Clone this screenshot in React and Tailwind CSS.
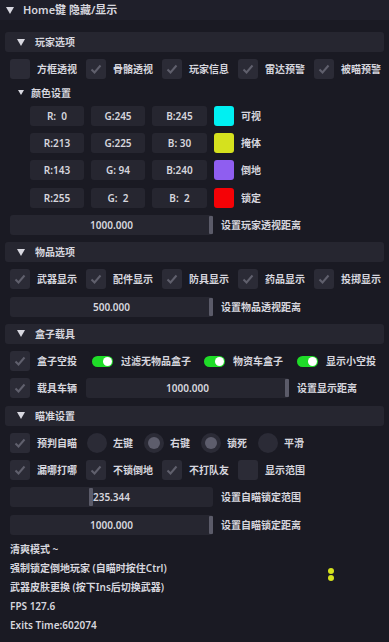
import React from 'react';

const FONT = { fontFamily: '"Noto Sans", "Noto Sans CJK SC", sans-serif' };

const Tri = ({ size = 'big' }) =>
  size === 'big' ? (
    <svg width="8" height="7" viewBox="0 0 8 7" className="shrink-0">
      <path d="M0 0 L8 0 L4 7 Z" fill="#d8d8e0" />
    </svg>
  ) : (
    <svg width="6" height="5" viewBox="0 0 6 5" className="shrink-0">
      <path d="M0 0 L6 0 L3 5 Z" fill="#d8d8e0" />
    </svg>
  );

const Header = ({ children }) => (
  <div className="-mx-[5px] h-[20px] rounded-[3px] bg-[#262630] flex items-center pl-[12px] gap-[10px]">
    <Tri />
    <span>{children}</span>
  </div>
);

const Box = ({ checked }) => (
  <div className="w-[20px] h-[20px] rounded-[3px] bg-[#2b2b36] flex items-center justify-center shrink-0">
    {checked && (
      <svg width="14" height="14" viewBox="0 0 14 14">
        <path d="M2.5 7.5 L5.5 10.5 L11.5 3.5" fill="none" stroke="#60606d" strokeWidth="2" />
      </svg>
    )}
  </div>
);

const Check = ({ label, checked = true, w = 'w-[76px]' }) => (
  <div className={`${w} flex items-center gap-[7px] shrink-0`}>
    <Box checked={checked} />
    <span className="whitespace-nowrap">{label}</span>
  </div>
);

const Toggle = ({ label, w }) => (
  <div className={`${w} flex items-center gap-[8px] shrink-0`}>
    <div className="w-[21px] h-[11px] rounded-full bg-[#1fdc28] flex items-center justify-end pr-[1px]">
      <div className="w-[9px] h-[9px] rounded-full bg-white" />
    </div>
    <span className="whitespace-nowrap">{label}</span>
  </div>
);

const Radio = ({ label, on }) => (
  <div className="w-[57px] flex items-center gap-[6px] shrink-0">
    <div className="w-[20px] h-[20px] rounded-full bg-[#2b2b36] flex items-center justify-center">
      {on && <div className="w-[12px] h-[12px] rounded-full bg-[#5d5d6c]" />}
    </div>
    <span className="whitespace-nowrap">{label}</span>
  </div>
);

const Slider = ({ value, label, w = 'w-[203px]', grab }) => (
  <div className="flex items-center gap-[8px]">
    <div className={`${w} h-[20px] rounded-[3px] bg-[#262630] relative flex items-center justify-center shrink-0`}>
      <span>{value}</span>
      <div
        className="absolute top-[1px] bottom-[1px] w-[4px] rounded-[1px] bg-[#5b5b69]"
        style={{ left: grab }}
      />
    </div>
    <span className="whitespace-nowrap">{label}</span>
  </div>
);

const colors = [
  { r: 'R:  0', g: 'G:245', b: 'B:245', c: 'bg-[#00f0f2]', n: '可视' },
  { r: 'R:213', g: 'G:225', b: 'B: 30', c: 'bg-[#d5e11e]', n: '掩体' },
  { r: 'R:143', g: 'G: 94', b: 'B:240', c: 'bg-[#8f5ef0]', n: '倒地' },
  { r: 'R:255', g: 'G:  2', b: 'B:  2', c: 'bg-[#f50206]', n: '锁定' },
];

const Field = ({ t, w = 'w-[54px]' }) => (
  <div className={`${w} h-[20px] rounded-[3px] bg-[#262630] flex items-center justify-center whitespace-pre`}>
    {t}
  </div>
);

export default function App() {
  return (
    <div
      className="w-[389px] h-[642px] bg-[#1a1a23] text-[#d6d6de] text-[10px] font-semibold leading-[14px] relative overflow-hidden"
      style={FONT}
    >
      <div className="h-[20px] bg-[#1f1f2a] flex items-center pl-[6px] gap-[9px] text-[11px]">
        <Tri />
        <span>Home键 隐藏/显示</span>
      </div>

      <div className="px-[10px] pt-[12px] flex flex-col gap-[7.25px]">
        <Header>玩家选项</Header>
        <div className="flex">
          <Check label="方框透视" checked={false} />
          <Check label="骨骼透视" />
          <Check label="玩家信息" />
          <Check label="雷达预警" />
          <Check label="被瞄预警" w="" />
        </div>
        <div className="h-[12px] flex items-center pl-[8px] gap-[7px]">
          <Tri size="small" />
          <span>颜色设置</span>
        </div>
        {colors.map((c, i) => (
          <div key={i} className="flex items-center pl-[20px] gap-[7px]">
            <Field t={c.r} />
            <Field t={c.g} />
            <Field t={c.b} w="w-[55px]" />
            <div className={`w-[20px] h-[20px] rounded-[3px] ${c.c}`} />
            <span>{c.n}</span>
          </div>
        ))}
        <Slider value="1000.000" label="设置玩家透视距离" grab="199px" />

        <Header>物品选项</Header>
        <div className="flex">
          <Check label="武器显示" />
          <Check label="配件显示" />
          <Check label="防具显示" />
          <Check label="药品显示" />
          <Check label="投掷显示" w="" />
        </div>
        <Slider value="500.000" label="设置物品透视距离" grab="199px" />

        <Header>盒子载具</Header>
        <div className="flex items-center">
          <Check label="盒子空投" w="w-[82px]" />
          <Toggle label="过滤无物品盒子" w="w-[112px]" />
          <Toggle label="物资车盒子" w="w-[93px]" />
          <Toggle label="显示小空投" w="" />
        </div>
        <div className="flex items-center">
          <Check label="载具车辆" />
          <Slider value="1000.000" label="设置显示距离" grab="199px" />
        </div>

        <Header>瞄准设置</Header>
        <div className="flex items-center">
          <Check label="预判自瞄" w="w-[77px]" />
          <Radio label="左键" />
          <Radio label="右键" on />
          <Radio label="锁死" on />
          <Radio label="平滑" />
        </div>
        <div className="flex">
          <Check label="漏哪打哪" />
          <Check label="不锁倒地" />
          <Check label="不打队友" />
          <Check label="显示范围" checked={false} w="" />
        </div>
        <Slider value="235.344" label="设置自瞄锁定范围" grab="79px" />
        <Slider value="1000.000" label="设置自瞄锁定距离" grab="199px" />

        <div className="flex flex-col gap-[5px]">
          <div>清爽模式 ~</div>
          <div>强制锁定倒地玩家 (自瞄时按住Ctrl)</div>
          <div>武器皮肤更换 (按下Ins后切换武器)</div>
          <div>FPS 127.6</div>
          <div>Exits Time:602074</div>
        </div>
      </div>

      <div className="absolute left-[328px] top-[568px] w-[6px] h-[6px] rounded-full bg-[#d5e11e]" />
      <div className="absolute left-[328px] top-[575px] w-[6px] h-[6px] rounded-full bg-[#d5e11e]" />
    </div>
  );
}
